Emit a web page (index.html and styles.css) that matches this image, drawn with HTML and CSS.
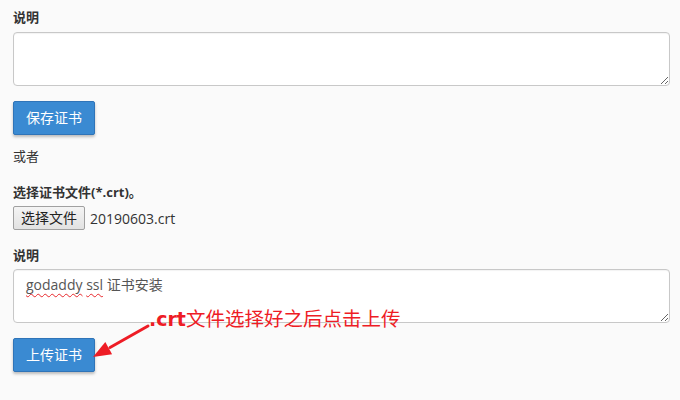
FILE: index.html
```html
<!DOCTYPE html>
<html lang="zh-CN">
<head>
<meta charset="utf-8">
<title>证书安装</title>
<link rel="stylesheet" href="styles.css">
</head>
<body>
<div class="page">
  <label class="field-label">说明</label>
  <textarea class="textarea"></textarea>
  <button class="btn-primary">保存证书</button>
  <p class="or">或者</p>
  <label class="field-label gap">选择证书文件(*.crt)。</label>
  <div class="file-row">
    <span class="file-btn">选择文件</span>
    <span class="file-name">20190603.crt</span>
  </div>
  <label class="field-label gap2">说明</label>
  <div class="textarea filled"><span class="misspelled">godaddy</span> <span class="misspelled">ssl</span> 证书安装</div>
  <button class="btn-primary">上传证书</button>

  <div class="annotation"><span class="anno-code">.crt</span>文件选择好之后点击上传</div>
  <svg class="arrow" width="70" height="50" viewBox="0 0 70 50" aria-hidden="true">
    <line x1="58" y1="6" x2="20" y2="27.5" stroke="#ee1c25" stroke-width="3" stroke-linecap="round"/>
    <polygon points="3,37 15.3,22.1 22.1,34.3" fill="#ee1c25"/>
  </svg>
</div>
</body>
</html>
```
FILE: styles.css
```css
html, body {
  margin: 0;
  padding: 0;
  background: #fafafa;
}
body {
  width: 680px;
  height: 400px;
  overflow: hidden;
  font-family: "Open Sans", "Noto Sans CJK SC", sans-serif;
  color: #333;
  font-size: 14px;
}
.page {
  position: relative;
  box-sizing: border-box;
  height: 400px;
  padding: 7px 10px 0 13px;
  border-left: 3px solid #f1f1f1;
  margin-left: -3px;
  display: flex;
  flex-direction: column;
  align-items: flex-start;
}
.field-label {
  display: block;
  font-weight: bold;
  font-size: 13px;
  line-height: 20px;
  margin-bottom: 5px;
}
.field-label.gap { margin-top: 16px; margin-bottom: 4px; }
.field-label.gap2 { margin-top: 15px; margin-bottom: 4px; }
.textarea {
  box-sizing: border-box;
  width: 657px;
  height: 54px;
  margin: 0;
  border: 1px solid #c8c8c8;
  border-radius: 4px;
  background: #fff;
  box-shadow: inset 0 1px 1px rgba(0,0,0,0.05);
  font-family: "Open Sans", "Noto Sans CJK SC", sans-serif;
  font-size: 14px;
  resize: vertical;
  padding: 5px 12px;
  display: block;
}
.filled {
  color: #555;
  line-height: 20px;
  overflow: auto;
}
.misspelled {
  text-decoration: underline wavy #e8282c;
  text-decoration-thickness: 1px;
  text-underline-offset: 3px;
}
.btn-primary {
  margin: 15px 0 0 0;
  box-sizing: border-box;
  height: 34px;
  padding: 0 12px;
  border: 1px solid #2f74b8;
  border-radius: 2px;
  background: #3a8ad2;
  color: #fff;
  font-family: "Open Sans", "Noto Sans CJK SC", sans-serif;
  font-size: 14px;
  line-height: 20px;
  box-shadow: 0 2px 3px rgba(0,0,0,0.25);
}
.or {
  margin: 11px 0 0 0;
  font-size: 13px;
  line-height: 20px;
}
.file-row {
  display: flex;
  align-items: center;
  gap: 5px;
  height: 24px;
}
.file-btn {
  box-sizing: border-box;
  height: 24px;
  padding: 0 7px;
  border: 1px solid #a0a0a0;
  border-radius: 2px;
  background: linear-gradient(#f4f4f4, #e2e2e2);
  color: #222;
  font-size: 14px;
  line-height: 22px;
}
.file-name {
  font-size: 14px;
  color: #333;
}
.annotation {
  position: absolute;
  left: 149px;
  top: 308px;
  font-family: "Noto Sans CJK SC", sans-serif;
  font-size: 19.5px;
  line-height: 20px;
  color: #ee1c25;
  white-space: nowrap;
}
.anno-code {
  font-family: "DejaVu Sans", sans-serif;
  font-weight: bold;
  font-size: 19px;
}
.arrow {
  position: absolute;
  left: 90px;
  top: 320px;
}
```
